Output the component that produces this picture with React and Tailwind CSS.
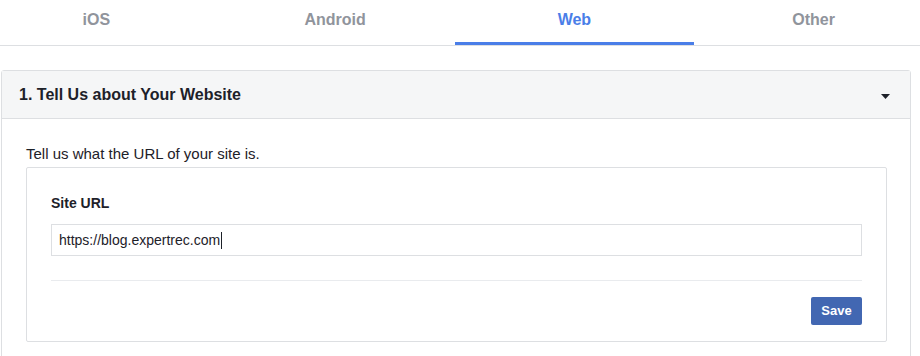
import React from 'react';

const tabs = ['iOS', 'Android', 'Web', 'Other'];

function App() {
  return (
    <div
      className="w-[920px] h-[356px] overflow-hidden bg-white text-[#1d2129]"
      style={{ fontFamily: '"Liberation Sans", Arial, sans-serif' }}
    >
      {/* tabs */}
      <div className="h-[46px] border-b border-[#dddfe2] overflow-hidden">
        <div className="flex h-full w-[956px] -ml-[23px]">
          {tabs.map((t) => (
            <div
              key={t}
              className={
                t === 'Web'
                  ? 'w-[240px] h-full flex items-center justify-center pb-[3px] text-[16px] font-bold text-[#4a7ee8] border-b-[3px] border-[#4a7ee8]'
                  : 'w-[239px] h-full flex items-center justify-center pb-[6px] text-[16px] font-bold text-[#90949c]'
              }
            >
              {t}
            </div>
          ))}
        </div>
      </div>

      {/* panel */}
      <div className="ml-[1px] mt-[24px] w-[910px] border border-[#dddfe2] rounded-[3px]">
        <div className="h-[48px] bg-[#f5f6f7] border-b border-[#dddfe2] flex items-center justify-between pl-[17px] pr-[20px]">
          <span className="text-[16px] font-bold leading-[20px]">1. Tell Us about Your Website</span>
          <svg width="9" height="5" viewBox="0 0 9 5" className="mt-[3px]">
            <path d="M0 0h9L4.5 5z" fill="#1d2129" />
          </svg>
        </div>

        <div className="pt-[26px] pl-[24px] pr-[23px] pb-[20px]">
          <p className="text-[15px] leading-[18px] mb-[4px] text-[#1d2129]">
            Tell us what the URL of your site is.
          </p>

          <div className="border border-[#dddfe2] rounded-[2px] px-[24px] pt-[27px] pb-[16px]">
            <div className="text-[14px] font-bold leading-[17px]">Site URL</div>
            <div className="mt-[12px] h-[32px] border border-[#dddfe2] flex items-center px-[7px] text-[14px] text-[#1d2129]">
              https://blog.expertrec.com
              <span className="inline-block w-[1px] h-[17px] bg-[#1d2129] ml-[1px]" />
            </div>
            <div className="mt-[24px] border-t border-[#e9ebee]" />
            <div className="mt-[16px] flex justify-end">
              <button className="h-[28px] w-[51px] rounded-[2px] bg-[#4267b2] text-white text-[13px] font-bold flex items-center justify-center">
                Save
              </button>
            </div>
          </div>
        </div>
      </div>
    </div>
  );
}

export default App;
